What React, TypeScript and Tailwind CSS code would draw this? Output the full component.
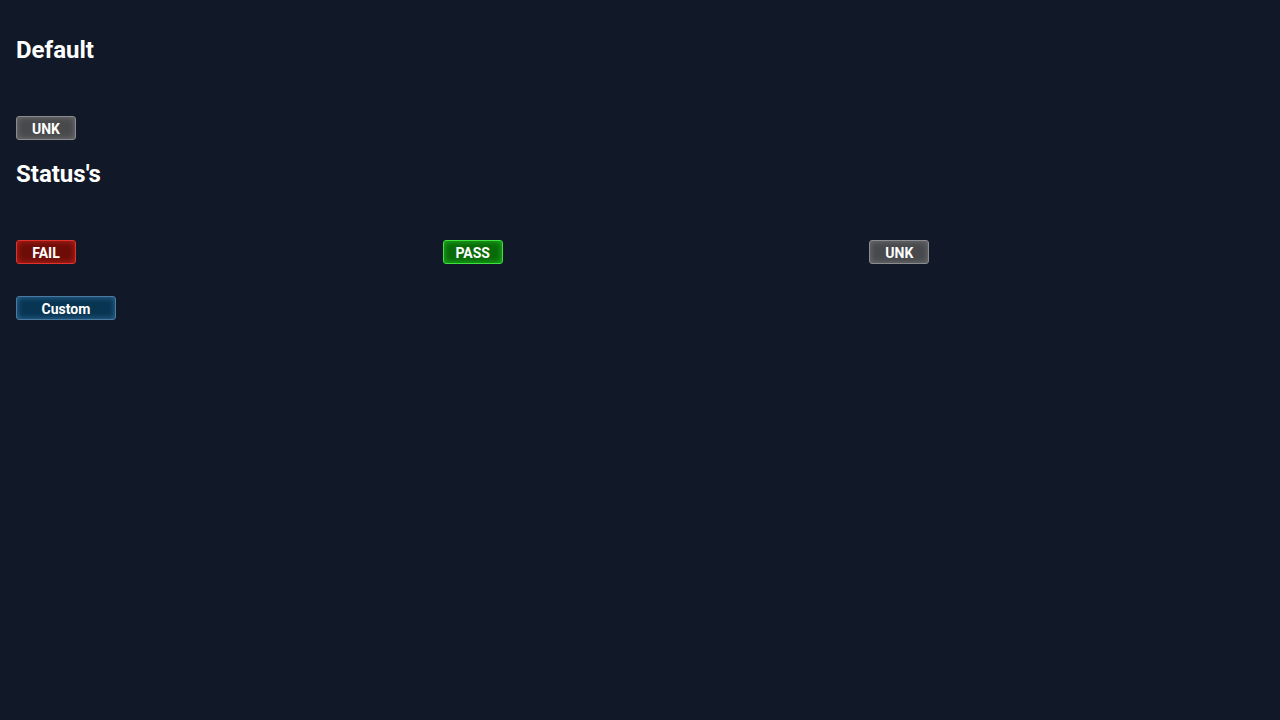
import React from "react";

type Status = "fail" | "pass" | "unk" | "custom";

const styles: Record<Status, string> = {
  fail: "bg-[#6e0d08] border-[#e3302a] shadow-[inset_0_0_6px_rgba(255,60,50,0.55)]",
  pass: "bg-[#086a08] border-[#3ee03e] shadow-[inset_0_0_6px_rgba(60,255,60,0.55)]",
  unk: "bg-[#48494c] border-[#8b8c8f] shadow-[inset_0_0_6px_rgba(200,200,200,0.35)]",
  custom: "bg-[#083552] border-[#4a7aa0] shadow-[inset_0_0_6px_rgba(90,160,220,0.55)]",
};

const Badge: React.FC<{ status: Status; label: string; width?: string }> = ({
  status,
  label,
  width = "w-[60px]",
}) => (
  <div
    className={`${width} h-6 flex items-center justify-center pt-px rounded-[3px] border text-sm font-bold text-white ${styles[status]}`}
  >
    {label}
  </div>
);

const App: React.FC = () => {
  return (
    <div
      className="min-h-screen bg-[#111827] text-white pt-[34px]"
      style={{ fontFamily: "Roboto, 'Liberation Sans', sans-serif" }}
    >
      <div className="px-4">
        <h2 className="text-2xl font-bold leading-8">Default</h2>
        <div className="mt-[50px]">
          <Badge status="unk" label="UNK" />
        </div>
        <h2 className="text-2xl font-bold leading-8 mt-[18px]">Status's</h2>
      </div>

      <div className="grid grid-cols-3 mt-[50px]">
        <div className="px-4">
          <Badge status="fail" label="FAIL" />
        </div>
        <div className="px-4">
          <Badge status="pass" label="PASS" />
        </div>
        <div className="px-4">
          <Badge status="unk" label="UNK" />
        </div>
      </div>

      <div className="px-4 mt-8">
        <Badge status="custom" label="Custom" width="w-[100px]" />
      </div>
    </div>
  );
};

export default App;
